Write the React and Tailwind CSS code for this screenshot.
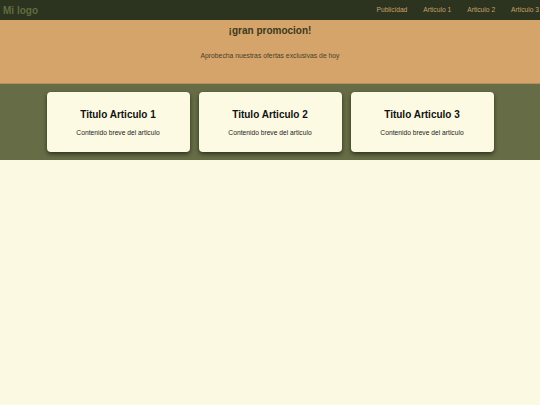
export default function App() {
  const articles = [1, 2, 3];
  return (
    <div className="min-h-screen bg-[#fcf9e2] font-['Liberation_Sans',Arial,sans-serif]">
      <nav className="flex h-5 items-center justify-between bg-[#2c3420] pl-[3px] pr-[1px]">
        <span className="text-[10px] font-bold text-[#5f6c3f]">Mi logo</span>
        <ul className="flex gap-[16px] text-[6.7px] text-[#c8a066]">
          <li>Publicidad</li>
          <li>Articulo 1</li>
          <li>Articulo 2</li>
          <li>Articulo 3</li>
        </ul>
      </nav>
      <section className="flex h-16 flex-col items-center border-b border-[#b89060] bg-[#d5a46b] pt-[3px] text-[#3a3a1c]">
        <h1 className="text-[10px] font-bold leading-[16px]">¡gran promocion!</h1>
        <p className="mt-[12px] text-[6.8px] text-[#4a3f26]">Aprobecha nuestras ofertas exclusivas de hoy</p>
      </section>
      <section className="flex justify-center gap-[9px] bg-[#666c45] py-2">
        {articles.map((n) => (
          <div
            key={n}
            className="flex h-[60px] w-[143px] flex-col items-center rounded-[4px] bg-[#fdfae3] pt-[16px] shadow-[0_2px_4px_rgba(0,0,0,0.55)]"
          >
            <h2 className="text-[10px] font-bold leading-[14px] text-[#111]">Titulo Articulo {n}</h2>
            <p className="mt-[6px] text-[6.7px] text-[#222]">Contenido breve del articulo</p>
          </div>
        ))}
      </section>
    </div>
  );
}
